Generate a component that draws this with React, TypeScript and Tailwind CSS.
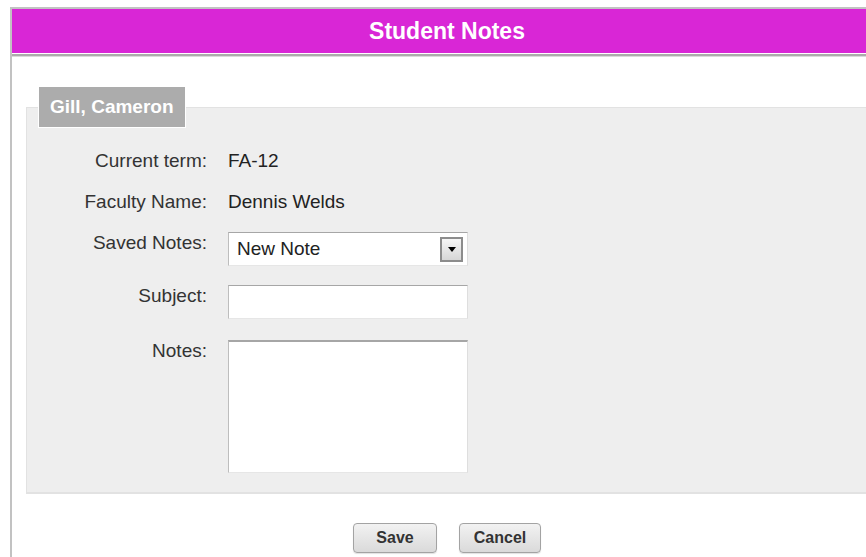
import { ReactNode } from 'react'

// label column on the left, field on the right; labels sit on the field's first line
function Row({ label, children, className = '' }: { label: string; children: ReactNode; className?: string }) {
  return (
    <div className={`flex items-start ${className}`}>
      <div className="w-[169px] text-right">{label}</div>
      <div className="ml-[21px]">{children}</div>
    </div>
  )
}

const fieldBorder =
  'border border-t-[#a6a6a6] border-l-[#bdbdbd] border-r-[#dedede] border-b-[#e6e6e6] bg-white'

function SelectBox({ value }: { value: string }) {
  return (
    <div className={`${fieldBorder} w-[240px] h-[34px] flex items-center justify-between pl-[8px] pr-[4px]`}>
      <span className="text-[#222]">{value}</span>
      <span className="w-[23px] h-[25px] border-2 border-[#8c8c8c] bg-gradient-to-b from-[#f6f6f6] to-[#d6d6d6] flex items-center justify-center">
        <svg width="8" height="5" viewBox="0 0 8 5">
          <path d="M0 0 H8 L4 5 Z" fill="#000" />
        </svg>
      </span>
    </div>
  )
}

function FormButton({ label, width }: { label: string; width: string }) {
  return (
    <button
      className={`${width} h-[30px] rounded-[4px] border border-[#a3a3a3] bg-gradient-to-b from-[#f2f2f2] to-[#dadada] text-[16px] leading-[20px] font-bold text-[#333] shadow-[0_1px_1px_rgba(0,0,0,0.12)]`}
    >
      {label}
    </button>
  )
}

export default function App() {
  return (
    <div className="w-[866px] h-[557px] overflow-hidden bg-white font-['Liberation_Sans',Arial,sans-serif] text-[19px] leading-[22px] text-[#333]">
      <div className="ml-[10px] mt-[7px] w-[872px] min-h-[560px] border-l-2 border-t-2 border-[#c2c2c2]">
        <header className="h-[44px] bg-[#d926d6] flex items-center justify-center text-white text-[23px] font-bold">
          Student Notes
        </header>
        <div className="h-px bg-white" />
        <div className="h-[2px] bg-[#ababab]" />
        <div className="h-px bg-[#dadada]" />

        <fieldset className="mx-[14px] mt-[29px] pl-[11px] pb-[19px] bg-[#eeeeee] border border-b-2 border-[#e2e2e2]">
          <legend className="h-[42px] px-[11px] flex items-center bg-[#acacac] border border-white text-white font-bold">
            Gill, Cameron
          </legend>

          <div className="pt-[22px]">
            <Row label="Current term:">
              <span className="text-[#222]">FA-12</span>
            </Row>
            <Row label="Faculty Name:" className="mt-[19px]">
              <span className="text-[#222]">Dennis Welds</span>
            </Row>
            <Row label="Saved Notes:" className="mt-[19px]">
              <SelectBox value="New Note" />
            </Row>
            <Row label="Subject:" className="mt-[19px]">
              <div className={`${fieldBorder} w-[240px] h-[34px]`} />
            </Row>
            <Row label="Notes:" className="mt-[21px]">
              <div className={`${fieldBorder} border-t-2 w-[240px] h-[133px]`} />
            </Row>
          </div>
        </fieldset>

        <div className="mt-[29px] flex justify-center gap-[22px]">
          <FormButton label="Save" width="w-[84px]" />
          <FormButton label="Cancel" width="w-[82px]" />
        </div>
      </div>
    </div>
  )
}
